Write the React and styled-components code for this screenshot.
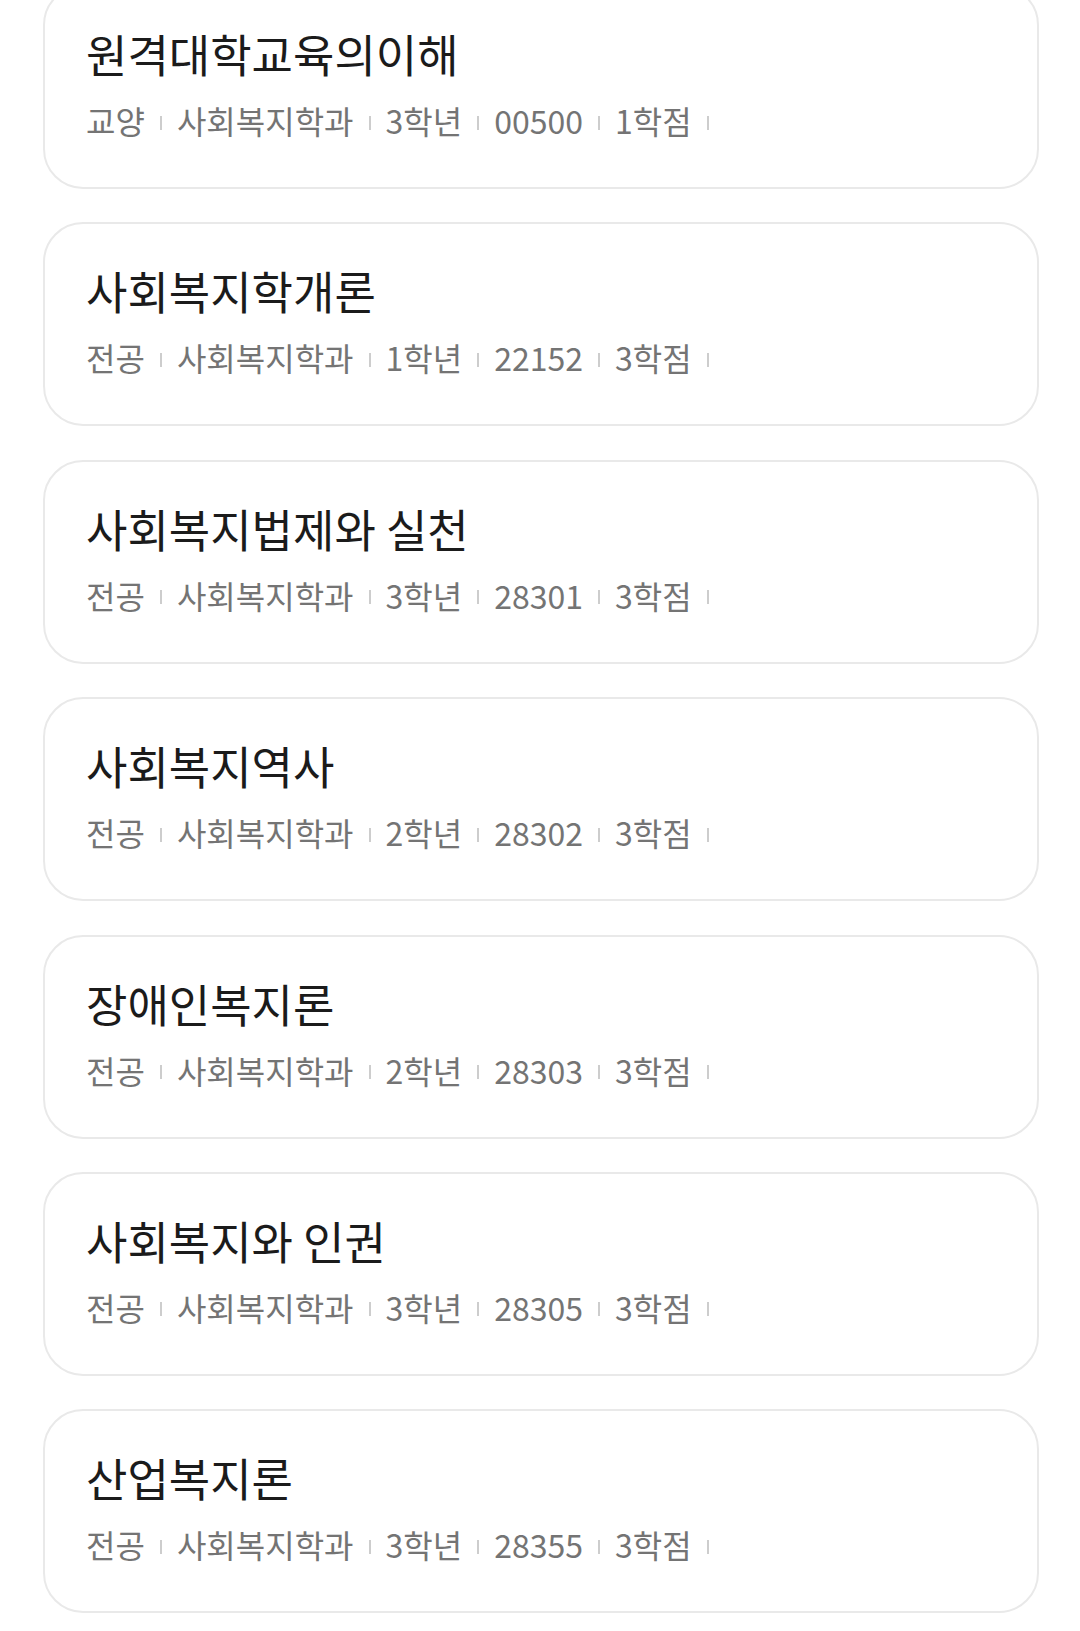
import styled, { createGlobalStyle } from "styled-components";

const GlobalStyle = createGlobalStyle`
  html, body {
    margin: 0;
    padding: 0;
    background: #ffffff;
  }
  body {
    font-family: "Noto Sans CJK KR", "Noto Sans", sans-serif;
    overflow: hidden;
  }
`;

const Page = styled.div`
  width: 1080px;
  height: 1631px;
  overflow: hidden;
  background: #ffffff;
`;

const CourseList = styled.ul`
  list-style: none;
  margin: -15px 0 0 0;
  padding: 0 41px 0 43px;
  display: flex;
  flex-direction: column;
  gap: 33.4px;
`;

const Card = styled.li`
  box-sizing: border-box;
  height: 204px;
  border: 2px solid #e9e9e9;
  border-radius: 40px;
  background: #ffffff;
  padding: 42px 0 0 41px;
  display: flex;
  flex-direction: column;
`;

const Title = styled.h3`
  margin: 0;
  font-size: 45px;
  font-weight: 400;
  line-height: 50px;
  color: #1b1b1b;
`;

const Meta = styled.div`
  margin-top: 21px;
  display: flex;
  align-items: center;
  font-size: 32px;
  line-height: 40px;
  color: #747474;
`;

const MetaItem = styled.span`
  display: inline-flex;
  align-items: center;
`;

const Divider = styled.span`
  display: inline-block;
  width: 2px;
  height: 14px;
  margin: 5px 15px 0;
  background: #cdcdcd;
`;

const courses = [
  { title: "원격대학교육의이해", type: "교양", dept: "사회복지학과", year: "3학년", code: "00500", credit: "1학점" },
  { title: "사회복지학개론", type: "전공", dept: "사회복지학과", year: "1학년", code: "22152", credit: "3학점" },
  { title: "사회복지법제와 실천", type: "전공", dept: "사회복지학과", year: "3학년", code: "28301", credit: "3학점" },
  { title: "사회복지역사", type: "전공", dept: "사회복지학과", year: "2학년", code: "28302", credit: "3학점" },
  { title: "장애인복지론", type: "전공", dept: "사회복지학과", year: "2학년", code: "28303", credit: "3학점" },
  { title: "사회복지와 인권", type: "전공", dept: "사회복지학과", year: "3학년", code: "28305", credit: "3학점" },
  { title: "산업복지론", type: "전공", dept: "사회복지학과", year: "3학년", code: "28355", credit: "3학점" },
];

function CourseCard({ course }) {
  const items = [course.type, course.dept, course.year, course.code, course.credit];
  return (
    <Card>
      <Title>{course.title}</Title>
      <Meta>
        {items.map((item, index) => (
          <MetaItem key={index}>
            {item}
            <Divider />
          </MetaItem>
        ))}
      </Meta>
    </Card>
  );
}

export default function App() {
  return (
    <Page>
      <GlobalStyle />
      <CourseList>
        {courses.map((course) => (
          <CourseCard key={course.code} course={course} />
        ))}
      </CourseList>
    </Page>
  );
}
